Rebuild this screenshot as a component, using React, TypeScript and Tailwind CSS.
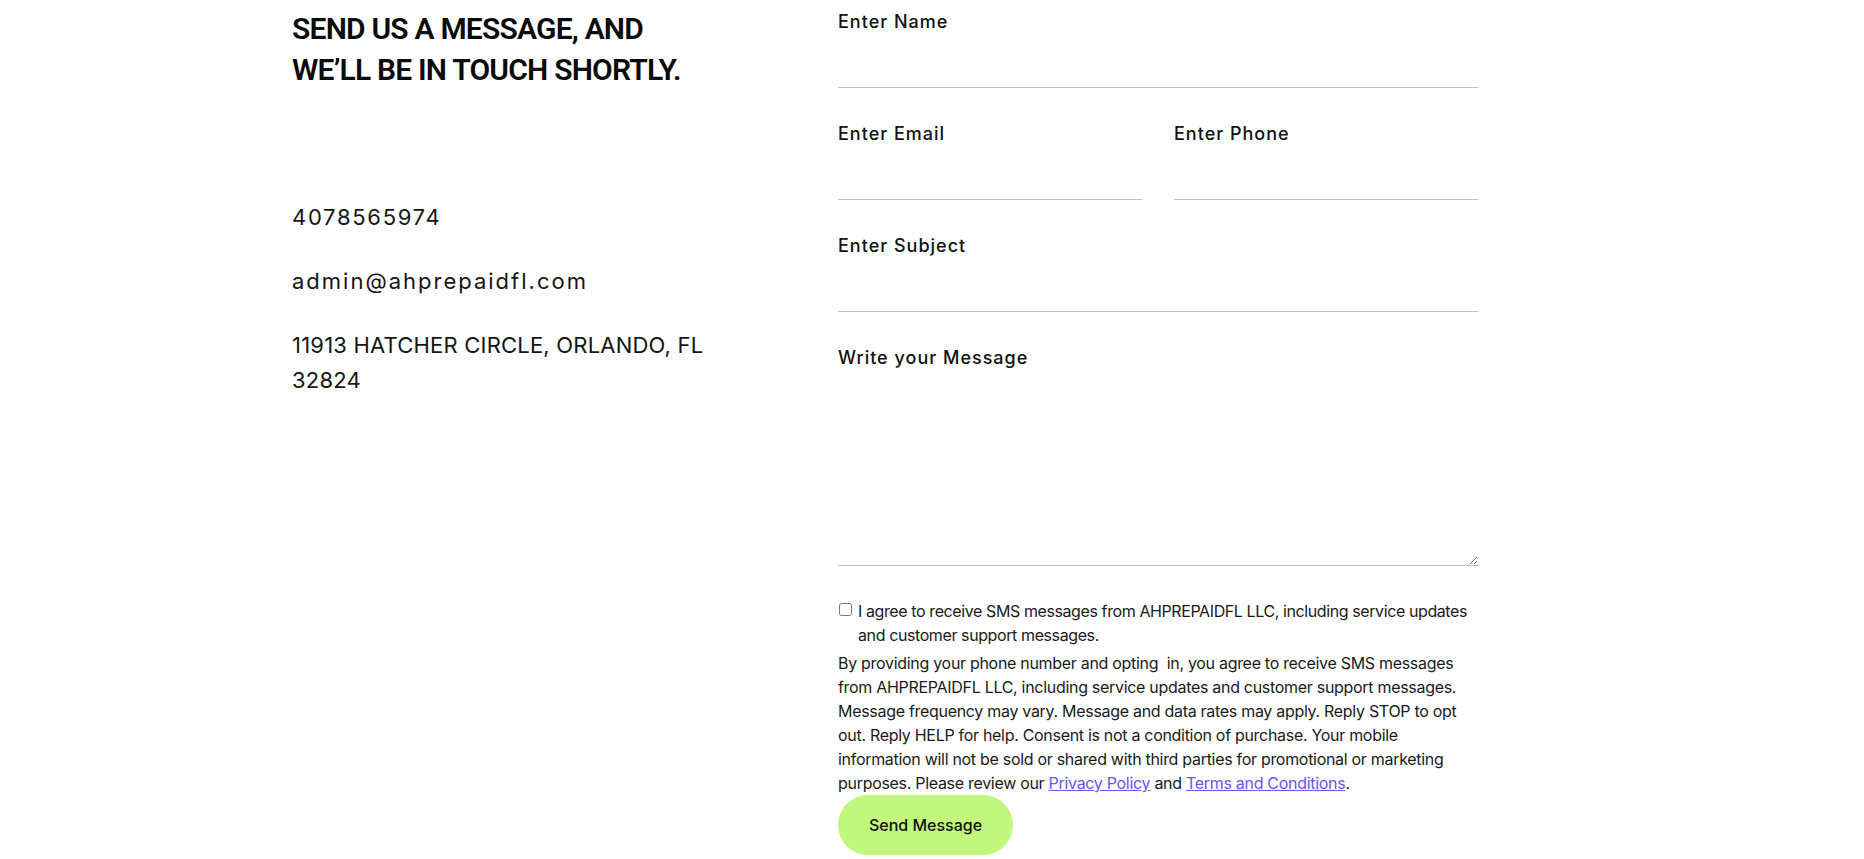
import React from "react";

export default function App() {
  const label = "block h-[28px] leading-[28px] text-[18px] font-medium text-[#111] tracking-[1px]";
  const input = "block w-full h-[52px] border-b border-[#c2c2c2] bg-transparent outline-none text-[16px]";
  return (
    <div className="min-h-screen bg-white text-[#111]" style={{ fontFamily: "Inter, 'Noto Sans', sans-serif" }}>
      <div className="flex pl-[292px] pt-[8px]">
        <div className="w-[546px] shrink-0">
          <h2
            className="text-[30px] leading-[41px] font-semibold uppercase tracking-[-0.8px] text-[#0a0a0a]"
            style={{ fontFamily: "Roboto, 'Liberation Sans', sans-serif" }}
          >
            Send us a message, and
            <br />
            we’ll be in touch shortly.
          </h2>
          <div className="mt-[110px] flex flex-col gap-[29px] text-[22px] leading-[35px] text-[#151515]">
            <div className="tracking-[1.7px]">4078565974</div>
            <div className="tracking-[2px]">admin@ahprepaidfl.com</div>
            <div className="w-[420px] tracking-[0.2px]">11913 HATCHER CIRCLE, ORLANDO, FL 32824</div>
          </div>
        </div>
        <form className="w-[640px] shrink-0 flex flex-col">
          <div className="flex flex-col gap-[32px]">
            <div>
              <label className={label}>Enter Name</label>
              <input className={input} />
            </div>
            <div className="grid grid-cols-2 gap-[32px]">
              <div>
                <label className={label}>Enter Email</label>
                <input className={input} />
              </div>
              <div>
                <label className={label}>Enter Phone</label>
                <input className={input} />
              </div>
            </div>
            <div>
              <label className={label}>Enter Subject</label>
              <input className={input} />
            </div>
            <div>
              <label className={label}>Write your Message</label>
              <textarea className="block w-full h-[194px] border-b border-[#c2c2c2] bg-transparent outline-none resize-y" />
            </div>
          </div>
          <div className="mt-[33px] flex items-start gap-[6px] text-[16px] leading-[24px] tracking-[-0.4px] text-[#1a1a1a]">
            <input type="checkbox" className="mt-[4px] ml-[1px] h-[13px] w-[13px] shrink-0" />
            <span>
              I agree to receive SMS messages from AHPREPAIDFL LLC, including service updates and customer support messages.
            </span>
          </div>
          <p className="mt-[4px] text-[16px] leading-[24px] tracking-[-0.3px] text-[#1a1a1a]">
            By providing your phone number and opting&nbsp; in, you agree to receive SMS messages from AHPREPAIDFL LLC,
            including service updates and customer support messages. Message frequency may vary. Message and data rates
            may apply. Reply STOP to opt out. Reply HELP for help. Consent is not a condition of purchase. Your mobile
            information will not be sold or shared with third parties for promotional or marketing purposes. Please review
            our{" "}
            <a href="#" className="text-[#6a55f5] underline">
              Privacy Policy
            </a>{" "}
            and{" "}
            <a href="#" className="text-[#6a55f5] underline">
              Terms and Conditions
            </a>
            .
          </p>
          <div>
            <button
              type="button"
              className="h-[60px] w-[175px] rounded-full bg-[#c1f77c] text-[16px] font-medium text-[#111]"
            >
              Send Message
            </button>
          </div>
        </form>
      </div>
    </div>
  );
}
